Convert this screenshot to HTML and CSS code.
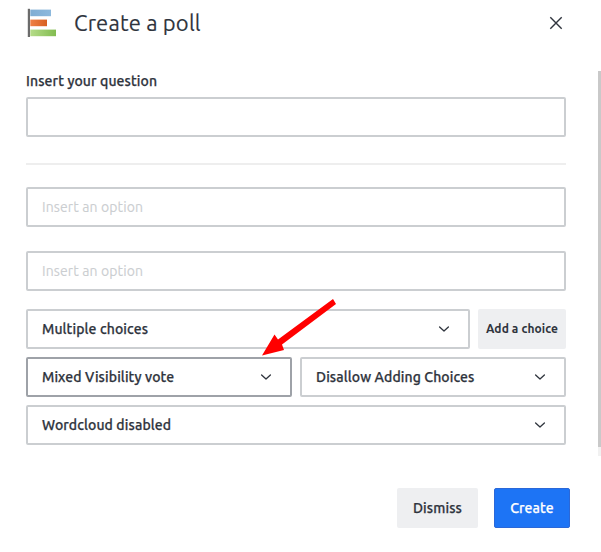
FILE: index.html
```
<!DOCTYPE html>
<html lang="en">
<head>
<meta charset="utf-8">
<title>Create a poll</title>
<link rel="stylesheet" href="styles.css">
</head>
<body>
<svg class="defs" width="0" height="0">
  <symbol id="chevron" viewBox="0 0 12 8"><path d="M1.6 2 L6 6 L10.4 2" fill="none" stroke="#2f343d" stroke-width="1.3" stroke-linecap="round" stroke-linejoin="round"/></symbol>
</svg>
<div class="modal">
  <header class="header">
    <svg class="logo" width="30" height="30" viewBox="0 0 30 30">
      <defs>
        <linearGradient id="blue"><stop offset="0" stop-color="#7fadd3"/><stop offset="1" stop-color="#8db9dd"/></linearGradient>
        <linearGradient id="orange"><stop offset="0" stop-color="#ef8045"/><stop offset="1" stop-color="#d76020"/></linearGradient>
        <linearGradient id="green"><stop offset="0" stop-color="#b5dc89"/><stop offset="1" stop-color="#82bc50"/></linearGradient>
      </defs>
      <rect x="0.8" y="0.8" width="2.2" height="28.2" fill="#6b6b6b"/>
      <rect x="3.3" y="1.6" width="20.7" height="6.6" fill="url(#blue)"/>
      <rect x="3.3" y="11.6" width="16.7" height="6.6" fill="url(#orange)"/>
      <rect x="3.3" y="21.6" width="25.7" height="6.6" fill="url(#green)"/>
    </svg>
    <h1 class="title">Create a poll</h1>
    <button class="close" aria-label="Close"><svg width="14" height="14" viewBox="0 0 14 14"><path d="M1.3 1.3 L12.7 12.7 M12.7 1.3 L1.3 12.7" stroke="#2f343d" stroke-width="1.4"/></svg></button>
  </header>
  <div class="viewport">
    <main class="form">
      <label class="label" for="question">Insert your question</label>
      <div class="field" id="question"></div>
      <hr class="divider">
      <div class="field option">Insert an option</div>
      <div class="field option second">Insert an option</div>
      <div class="row">
        <div class="field select">Multiple choices<svg width="12" height="8"><use href="#chevron"/></svg></div>
        <button class="btn add">Add a choice</button>
      </div>
      <div class="row">
        <div class="field select focused">Mixed Visibility vote<svg width="12" height="8"><use href="#chevron"/></svg></div>
        <div class="field select">Disallow Adding Choices<svg width="12" height="8"><use href="#chevron"/></svg></div>
      </div>
      <div class="row">
        <div class="field select">Wordcloud disabled<svg width="12" height="8"><use href="#chevron"/></svg></div>
      </div>
    </main>
    <div class="track"><div class="thumb"></div></div>
  </div>
  <footer class="footer">
    <button class="btn dismiss">Dismiss</button>
    <button class="btn create">Create</button>
  </footer>
</div>
<svg class="arrow" width="77" height="60" viewBox="0 0 77 60"><path d="M2 57.5 L14.5 36.5 L18 41.5 L73 1 L76 6 L22 46.5 L24 52 Z" fill="#f00"/></svg>
</body>
</html>
```
FILE: styles.css
```
* { box-sizing: border-box; }
body {
  margin: 0;
  background: #fff;
  color: #2f343d;
  font: 500 14px/20px Ubuntu, "Noto Sans", sans-serif;
  letter-spacing: 0.11px;
  -webkit-text-stroke: 0.25px currentColor;
  overflow: hidden;
}
.defs { position: absolute; }
.modal { width: 601px; height: 552px; display: flex; flex-direction: column; }
.header { height: 71px; padding: 8px 37px 0 27px; display: flex; align-items: flex-start; }
.title {
  margin: 0 auto 0 17px;
  font-size: 22px;
  line-height: 30px;
  font-weight: 400;
  letter-spacing: 0.16px;
  -webkit-text-stroke-width: 0.15px;
  white-space: nowrap;
}
.close { border: 0; padding: 0; margin: 8px 1px 0 0; background: none; line-height: 0; }
.viewport { height: 385px; display: flex; justify-content: space-between; }
.form { width: 566px; padding-left: 26px; }
.label { display: block; height: 26px; }
.field {
  height: 40px;
  border: 2px solid #cbced1;
  border-radius: 2px;
  padding: 0 14px;
  display: flex;
  align-items: center;
  white-space: nowrap;
}
.divider { height: 2px; margin: 26px 0 22px; border: 0; background: #eee; }
.option { color: #cbced1; font-weight: 400; letter-spacing: 0.12px; -webkit-text-stroke-width: 0.1px; }
.second { margin: 24px 0 18px; }
.row { display: flex; gap: 8px; margin-bottom: 8px; }
.select { flex: 1; justify-content: space-between; padding-right: 18px; }
.focused { border-color: #9ea2a8; }
.btn {
  height: 40px;
  padding: 0;
  border: 0;
  border-radius: 2px;
  background: #eeeff1;
  color: #2f343d;
  font: inherit;
  letter-spacing: inherit;
  white-space: nowrap;
}
.add { width: 88px; font-size: 12px; font-weight: 700; letter-spacing: 0.1px; -webkit-text-stroke-width: 0; }
.track { width: 3px; background: #f1f1f1; }
.thumb { height: 376px; background: #c9c9c9; }
.footer { display: flex; justify-content: flex-end; gap: 16px; padding: 32px 31px 0 0; }
.dismiss { width: 81px; }
.create { width: 76px; background: #1d74f5; color: #fff; border: 1px solid #2b68d8; }
.arrow { position: absolute; left: 260px; top: 298px; }
```
